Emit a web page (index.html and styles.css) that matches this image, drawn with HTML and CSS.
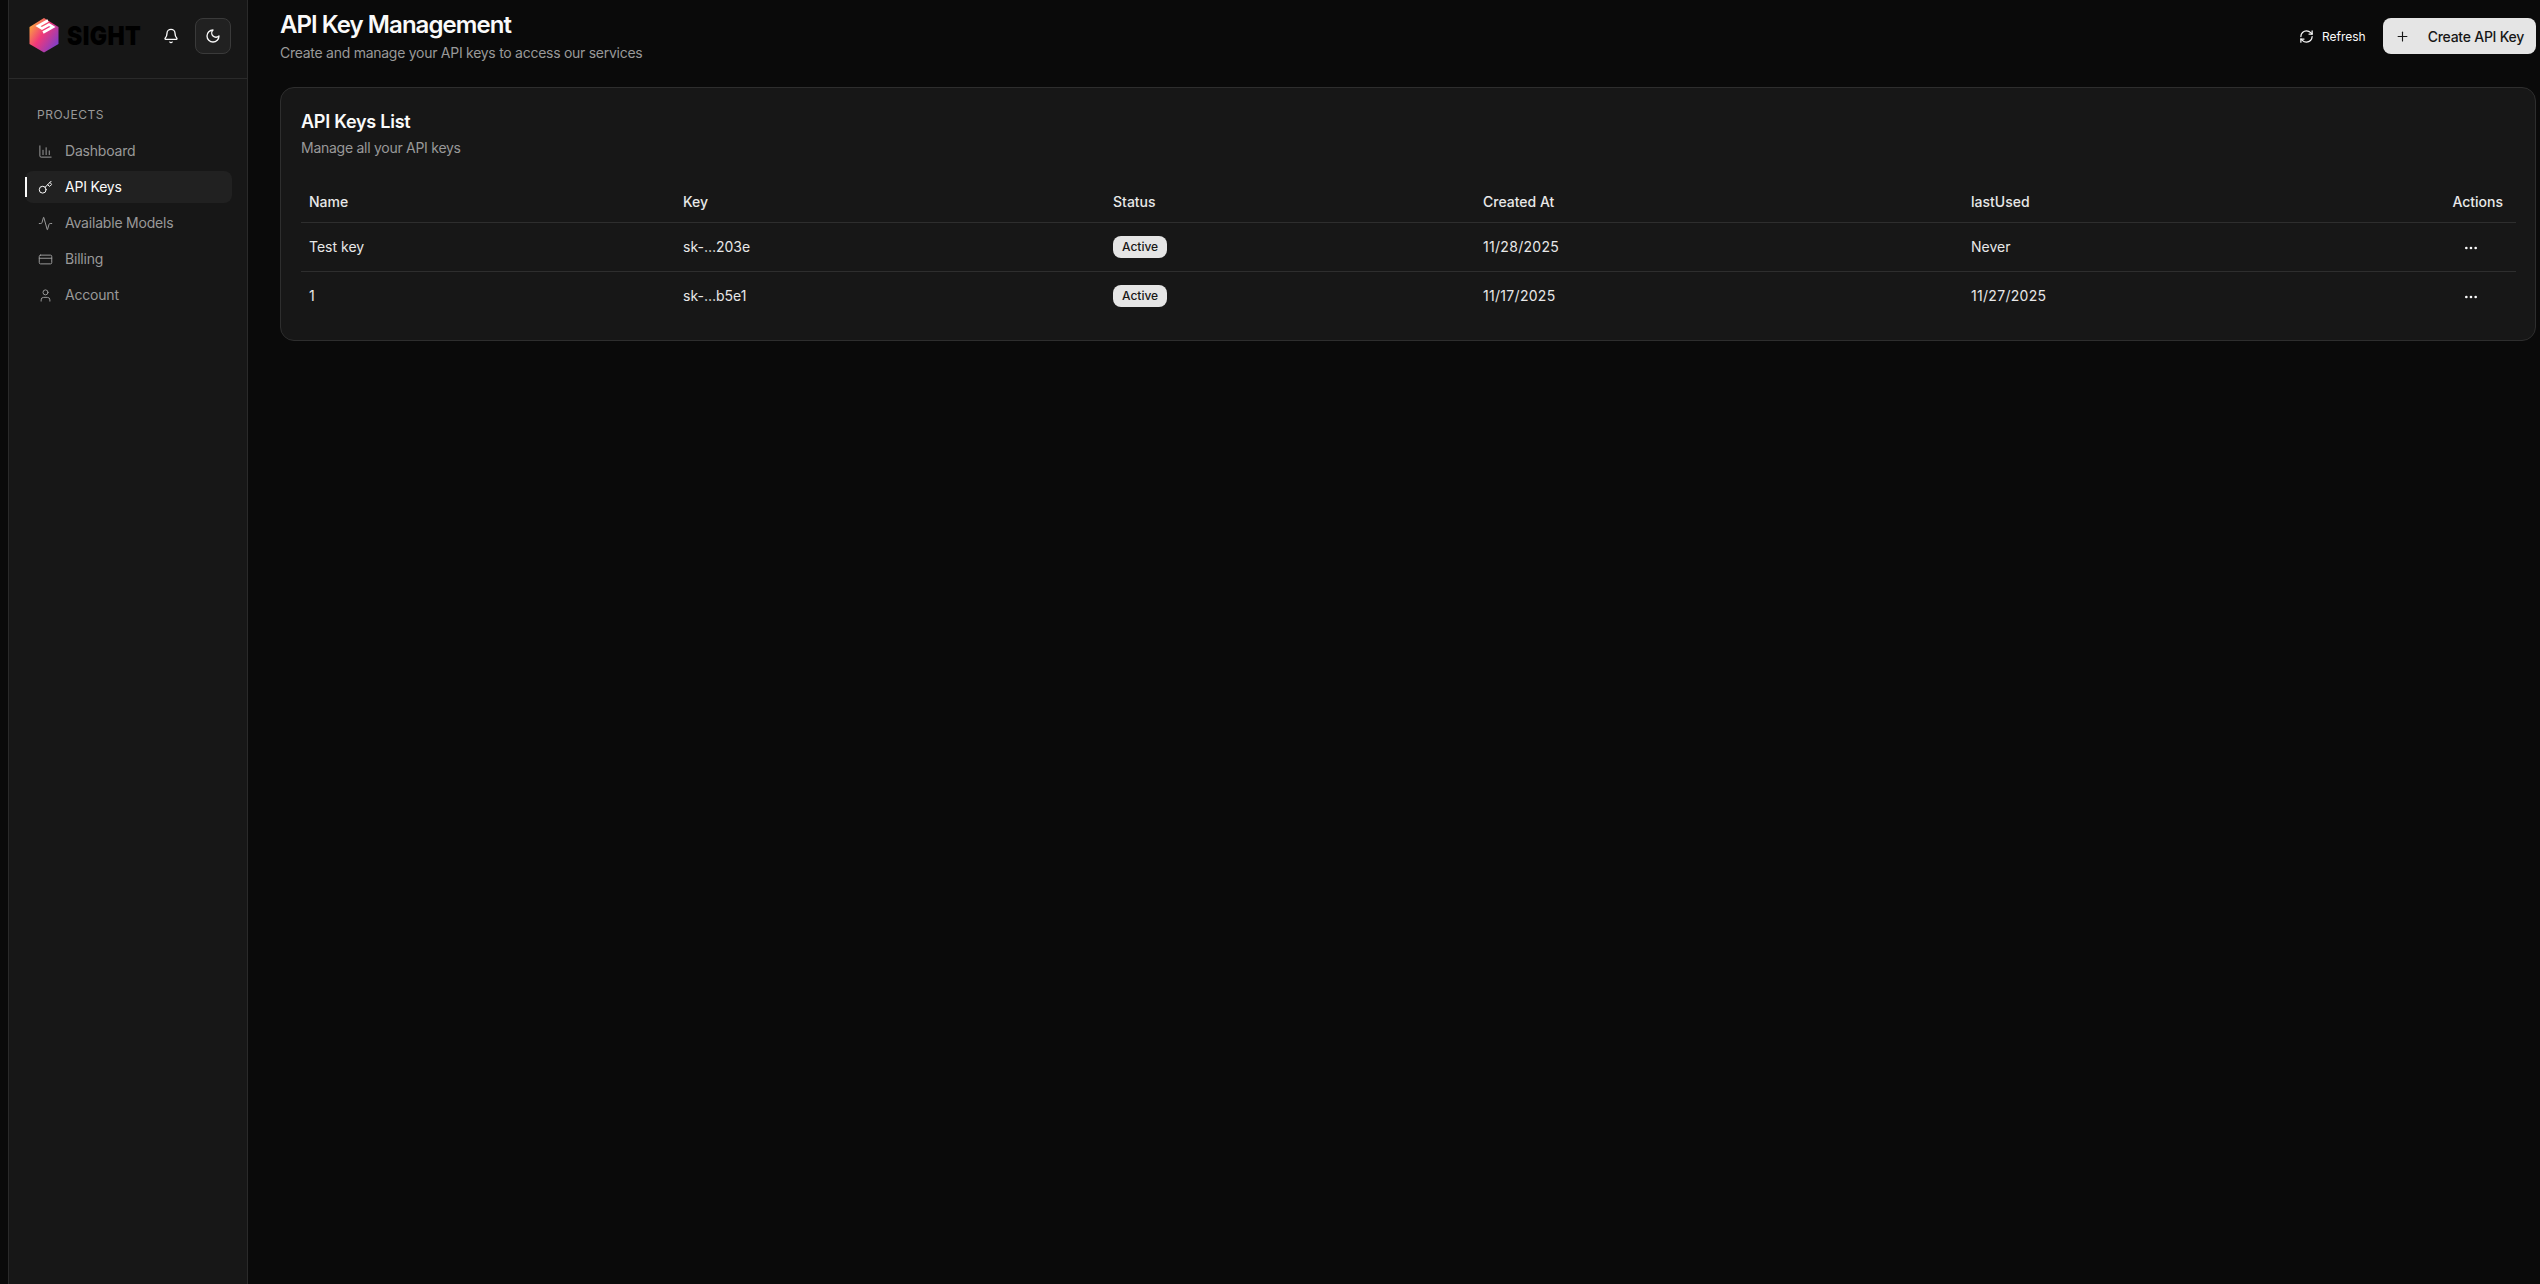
FILE: index.html
```html
<!DOCTYPE html>
<html lang="en">
<head>
    <meta charset="UTF-8">
    <title>API Key Management</title>
    <link rel="stylesheet" href="styles.css">
</head>
<body>
    <div class="layout">
        <aside class="sidebar">
            <div class="sidebar-head">
                <div class="logo">
                    <svg class="logo-mark" viewBox="0 0 30 35" width="30" height="35">
                        <defs>
                            <linearGradient id="cube" x1="0" y1="0.1" x2="1" y2="0.9">
                                <stop offset="0" stop-color="#fdb833"/>
                                <stop offset="0.45" stop-color="#f0387a"/>
                                <stop offset="1" stop-color="#6d3fd6"/>
                            </linearGradient>
                        </defs>
                        <polygon points="15,0 29.5,9 29.5,26 15,34.5 0.5,26 0.5,9" fill="url(#cube)"/>
                        <polyline points="19,2.5 9,8 13,10.5 20,6.5 24,9 14,14.5" fill="none" stroke="#fff" stroke-width="2.6"/>
                    </svg>
                    <span class="logo-text">SIGHT</span>
                </div>
                <button class="bell-btn">
                    <svg class="icon" viewBox="0 0 24 24"><path d="M10.268 21a2 2 0 0 0 3.464 0"/><path d="M3.262 15.326A1 1 0 0 0 4 17h16a1 1 0 0 0 .74-1.673C19.41 13.956 18 12.499 18 8A6 6 0 0 0 6 8c0 4.499-1.411 5.956-2.738 7.326"/></svg>
                </button>
                <button class="theme-btn">
                    <svg class="icon" viewBox="0 0 24 24"><path d="M12 3a6 6 0 0 0 9 9 9 9 0 1 1-9-9Z"/></svg>
                </button>
            </div>
            <nav class="nav">
                <div class="nav-label">PROJECTS</div>
                <a class="nav-item">
                    <svg class="icon" viewBox="0 0 24 24"><path d="M3 3v16a2 2 0 0 0 2 2h16"/><path d="M18 17V11"/><path d="M13 17V6"/><path d="M8 17V10"/></svg>
                    Dashboard
                </a>
                <a class="nav-item active">
                    <svg class="icon" viewBox="0 0 24 24"><path d="m15.5 7.5 2.3 2.3a1 1 0 0 0 1.4 0l2.1-2.1a1 1 0 0 0 0-1.4L19 4"/><path d="m21 2-9.6 9.6"/><circle cx="7.5" cy="15.5" r="5.5"/></svg>
                    API Keys
                </a>
                <a class="nav-item">
                    <svg class="icon" viewBox="0 0 24 24"><path d="M22 12h-2.48a2 2 0 0 0-1.93 1.46l-2.35 8.36a.25.25 0 0 1-.48 0L9.24 2.18a.25.25 0 0 0-.48 0l-2.35 8.36A2 2 0 0 1 4.49 12H2"/></svg>
                    Available Models
                </a>
                <a class="nav-item">
                    <svg class="icon" viewBox="0 0 24 24"><rect x="2" y="5" width="20" height="14" rx="2"/><line x1="2" y1="10" x2="22" y2="10"/></svg>
                    Billing
                </a>
                <a class="nav-item">
                    <svg class="icon" viewBox="0 0 24 24"><path d="M19 21v-2a4 4 0 0 0-4-4H9a4 4 0 0 0-4 4v2"/><circle cx="12" cy="7" r="4"/></svg>
                    Account
                </a>
            </nav>
        </aside>

        <main class="main">
            <header class="page-head">
                <div>
                    <h1>API Key Management</h1>
                    <p class="muted">Create and manage your API keys to access our services</p>
                </div>
                <div class="page-actions">
                    <button class="refresh-btn">
                        <svg class="icon" viewBox="0 0 24 24"><path d="M3 12a9 9 0 0 1 9-9 9.75 9.75 0 0 1 6.74 2.74L21 8"/><path d="M21 3v5h-5"/><path d="M21 12a9 9 0 0 1-9 9 9.75 9.75 0 0 1-6.74-2.74L3 16"/><path d="M8 16H3v5"/></svg>
                        Refresh
                    </button>
                    <button class="create-btn">
                        <svg class="icon" viewBox="0 0 24 24"><path d="M5 12h14"/><path d="M12 5v14"/></svg>
                        Create API Key
                    </button>
                </div>
            </header>

            <section class="card">
                <h2>API Keys List</h2>
                <p class="muted">Manage all your API keys</p>
                <table class="keys-table">
                    <colgroup>
                        <col class="col-name">
                        <col class="col-key">
                        <col class="col-status">
                        <col class="col-created">
                        <col class="col-used">
                        <col>
                    </colgroup>
                    <thead>
                        <tr>
                            <th>Name</th>
                            <th>Key</th>
                            <th>Status</th>
                            <th>Created At</th>
                            <th>lastUsed</th>
                            <th class="actions-head">Actions</th>
                        </tr>
                    </thead>
                    <tbody>
                        <tr>
                            <td>Test key</td>
                            <td>sk-…203e</td>
                            <td><span class="badge">Active</span></td>
                            <td class="date">11/28/2025</td>
                            <td>Never</td>
                            <td class="actions-cell"><button class="more-btn"><svg class="icon" viewBox="0 0 24 24"><circle cx="12" cy="12" r="1"/><circle cx="19" cy="12" r="1"/><circle cx="5" cy="12" r="1"/></svg></button></td>
                        </tr>
                        <tr>
                            <td>1</td>
                            <td>sk-…b5e1</td>
                            <td><span class="badge">Active</span></td>
                            <td class="date">11/17/2025</td>
                            <td class="date">11/27/2025</td>
                            <td class="actions-cell"><button class="more-btn"><svg class="icon" viewBox="0 0 24 24"><circle cx="12" cy="12" r="1"/><circle cx="19" cy="12" r="1"/><circle cx="5" cy="12" r="1"/></svg></button></td>
                        </tr>
                    </tbody>
                </table>
            </section>
        </main>
    </div>
</body>
</html>
```

FILE: styles.css
```css
* {
    box-sizing: border-box;
}
html, body {
    height: 100%;
}
body {
    margin: 0;
    background-color: #0a0a0a;
    color: #fafafa;
    font-family: Inter, "Liberation Sans", sans-serif;
    font-size: 14px;
    line-height: 20px;
}
button {
    font-family: inherit;
    border: none;
    background: none;
    color: inherit;
    padding: 0;
}
.icon {
    width: 16px;
    height: 16px;
    fill: none;
    stroke: currentColor;
    stroke-width: 2;
    stroke-linecap: round;
    stroke-linejoin: round;
    flex-shrink: 0;
}
.layout {
    display: flex;
    height: 1284px;
    padding-left: 8px;
    overflow: hidden;
}
.sidebar {
    width: 240px;
    flex-shrink: 0;
    background-color: #171717;
    border-left: 1px solid #2a2a2a;
    border-right: 1px solid #2a2a2a;
}
.sidebar-head {
    height: 79px;
    display: flex;
    align-items: center;
    padding: 0 16px 7px 20px;
    border-bottom: 1px solid #2a2a2a;
}
.logo {
    display: flex;
    align-items: center;
    gap: 8px;
    flex: 1;
}
.logo-mark {
    flex-shrink: 0;
}
.logo-text {
    display: inline-block;
    font-weight: 900;
    font-size: 26px;
    line-height: 30px;
    letter-spacing: 0.5px;
    color: #000;
    transform: scaleX(0.88);
    transform-origin: left center;
}
.bell-btn {
    width: 20px;
    height: 20px;
    display: flex;
    align-items: center;
    justify-content: center;
    margin-right: 14px;
}
.theme-btn {
    width: 36px;
    height: 36px;
    display: flex;
    align-items: center;
    justify-content: center;
    background-color: #212121;
    border: 1px solid #3a3a3a;
    border-radius: 8px;
}
.nav {
    padding: 28px 15px 0 16px;
}
.nav-label {
    padding-left: 12px;
    margin-bottom: 12px;
    font-size: 12px;
    line-height: 16px;
    letter-spacing: 0.5px;
    color: #999;
}
.nav-item {
    position: relative;
    display: flex;
    align-items: center;
    gap: 12px;
    height: 32px;
    margin-bottom: 4px;
    padding-left: 13px;
    border-radius: 8px;
    letter-spacing: -0.2px;
    color: #999;
}
.nav-item .icon {
    width: 15px;
    height: 15px;
    stroke-width: 1.6;
}
.nav-item.active {
    background-color: #212121;
    color: #fafafa;
}
.nav-item.active::before {
    content: "";
    position: absolute;
    left: 0;
    top: 6px;
    width: 2px;
    height: 20px;
    background-color: #fafafa;
}
.main {
    flex: 1;
    min-width: 0;
    padding: 9px 4px 0 32px;
}
.page-head {
    display: flex;
    justify-content: space-between;
    align-items: center;
    margin-bottom: 24px;
}
h1 {
    margin: 0 0 2px;
    font-size: 24px;
    line-height: 32px;
    font-weight: 600;
    letter-spacing: -0.95px;
}
.muted {
    margin: 0;
    letter-spacing: -0.27px;
    color: #999;
}
.page-actions {
    display: flex;
    align-items: center;
    gap: 17px;
}
.refresh-btn {
    display: flex;
    align-items: center;
    gap: 8px;
    font-size: 12px;
    font-weight: 400;
}
.refresh-btn .icon {
    width: 15px;
    height: 15px;
}
.create-btn {
    display: flex;
    align-items: center;
    gap: 18px;
    height: 36px;
    padding: 0 12px;
    font-size: 14px;
    font-weight: 500;
    letter-spacing: -0.25px;
    background-color: #e5e5e5;
    color: #171717;
    border-radius: 8px;
}
.create-btn .icon {
    width: 15px;
    height: 15px;
    stroke-width: 1.8;
}
.card {
    height: 254px;
    padding: 20px 20px 0;
    background-color: #171717;
    border: 1px solid #2e2e2e;
    border-radius: 14px;
}
h2 {
    margin: 0 0 2px;
    font-size: 18px;
    line-height: 28px;
    font-weight: 600;
    letter-spacing: -0.25px;
}
.keys-table {
    width: 2215px;
    margin-top: 23px;
    border-collapse: collapse;
    table-layout: fixed;
    color: #e8e8e8;
}
.col-name { width: 374px; }
.col-key { width: 430px; }
.col-status { width: 370px; }
.col-created { width: 488px; }
.col-used { width: 400px; }
th {
    height: 41px;
    padding: 2px 8px 0;
    text-align: left;
    font-weight: 500;
    border-bottom: 1px solid #2e2e2e;
}
td {
    height: 49px;
    padding: 0 8px;
    border-bottom: 1px solid #2e2e2e;
}
tbody tr:last-child td {
    border-bottom: none;
}
.date {
    letter-spacing: 0.3px;
}
.actions-head {
    text-align: right;
    padding-right: 13px;
}
.actions-cell {
    text-align: right;
    padding-right: 37px;
}
.more-btn {
    display: inline-flex;
    vertical-align: middle;
    color: #fafafa;
}
.badge {
    display: inline-block;
    padding: 2px 9px;
    font-size: 12px;
    line-height: 18px;
    font-weight: 500;
    background-color: #e5e5e5;
    color: #171717;
    border-radius: 8px;
}
```
